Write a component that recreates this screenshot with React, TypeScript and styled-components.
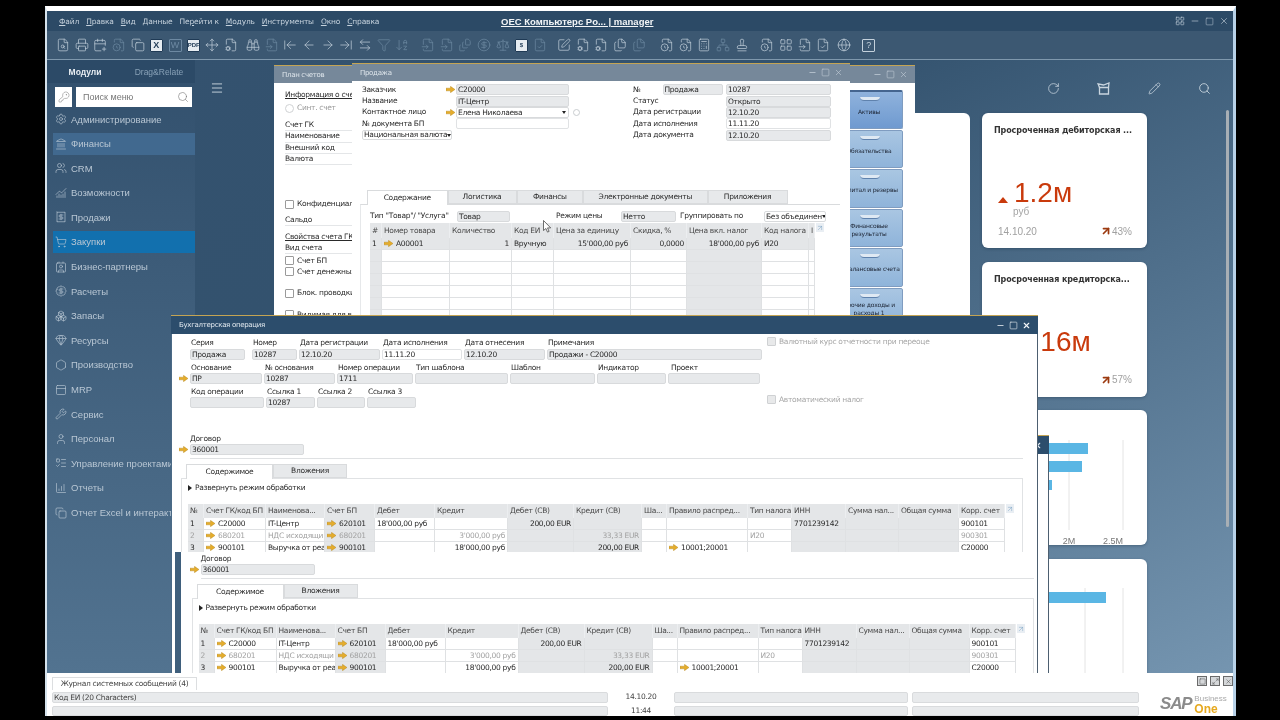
import React from "react";
import styled, { createGlobalStyle } from "styled-components";
import {
  ArrowDownAZ,
  ArrowLeft,
  ArrowLeftRight,
  ArrowLeftToLine,
  ArrowRight,
  ArrowRightToLine,
  ArrowUpRight,
  BadgeDollarSign,
  Binoculars,
  Boxes,
  Calculator,
  CalendarPlus,
  ChartColumnIncreasing,
  ChartNoAxesCombined,
  CircleDollarSign,
  Contact,
  Copy,
  FileCheck,
  FileClock,
  FileCog,
  FileInput,
  FileSearch,
  FileStack,
  Files,
  Filter,
  Gem,
  Globe,
  Hexagon,
  KeyRound,
  Landmark,
  LayoutGrid,
  ListTodo,
  Maximize2,
  Menu,
  Minus,
  Move,
  Network,
  PanelTop,
  Pencil,
  Printer,
  Receipt,
  RotateCw,
  Scale,
  Search,
  Settings,
  ShoppingCart,
  Square,
  SquarePen,
  Stamp,
  User,
  Users,
  Wrench,
  X,
} from "lucide-react";

const formFont = `"DejaVu Sans", "Liberation Sans", sans-serif`;
const uiFont = `"Liberation Sans", Arial, sans-serif`;

const GlobalStyle = createGlobalStyle`
  html, body {
    margin: 0;
    background: #000;
    overflow: hidden;
  }
  * {
    box-sizing: border-box;
  }
`;

const Frame = styled.div`
  width: 1191px;
  height: 710px;
  margin: 6px 0 0 45px;
  display: flex;
  flex-direction: column;
  background: #fff;
  border-top: 5px solid #fff;
  border-left: 2px solid #d5e2ec;
  border-right: 3px solid #b8d2e8;
  font-family: ${uiFont};
  filter: blur(0.35px);
`;

const TitleBar = styled.div`
  height: 20px;
  flex: none;
  position: relative;
  display: flex;
  align-items: center;
  padding: 0 4px 0 12px;
  background: #2c4a66;
`;

const MenuBar = styled.nav`
  display: flex;
  gap: 7px;
  color: #c6d2dd;
  font: 7.5px ${formFont};
  letter-spacing: -0.15px;
`;

const AppTitle = styled.div`
  position: absolute;
  left: 454px;
  color: #f2f5f7;
  font-size: 9.5px;
  font-weight: 700;
  text-decoration: underline;
  white-space: nowrap;
`;

const FrameControls = styled.div`
  margin-left: auto;
  display: flex;
  align-items: center;
  gap: 5px;
  color: #c3d0db;
`;

const Toolbar = styled.div`
  height: 29px;
  flex: none;
  display: flex;
  align-items: center;
  padding-left: 6.6px;
  background: #3c5872;
  border-bottom: 1px solid #7f98ad;
`;

const ToolGroup = styled.div<{ $offset: number }>`
  display: flex;
  margin-left: ${(p) => p.$offset}px;
`;

const ToolButton = styled.span<{ $dim?: boolean }>`
  width: 18.7px;
  height: 15px;
  display: flex;
  align-items: center;
  justify-content: center;
  color: ${(p) => (p.$dim ? "#6d89a2" : "#c4d1dc")};
`;

const BoxGlyph = styled.span<{ $solid?: boolean; $dim?: boolean }>`
  width: 13px;
  height: 13px;
  display: flex;
  align-items: center;
  justify-content: center;
  border: 1px solid currentColor;
  border-radius: 1px;
  background: ${(p) => (p.$solid ? "#e6ecf1" : "transparent")};
  color: ${(p) => (p.$solid ? "#1f3a55" : "inherit")};
  font: ${(p) => (p.$solid ? 700 : 400)} ${(p) => (p.$dim ? 6 : 9)}px ${uiFont};
`;

const Workspace = styled.div`
  position: relative;
  flex: 1;
  min-height: 0;
  display: flex;
  overflow: hidden;
  background: linear-gradient(155deg, #34526f 0%, #33526e 32%, #4f6f8b 62%, #7595b0 100%);
`;

const Sidebar = styled.aside`
  width: 148px;
  flex: none;
  background: linear-gradient(180deg, #32506d 0%, #527390 100%);
`;

const SideTabs = styled.div`
  height: 23px;
  display: flex;
  align-items: center;
  background: #2c4a67;
  font-size: 8.5px;
`;

const SideTab = styled.span<{ $active?: boolean; $width: number }>`
  width: ${(p) => p.$width}px;
  text-align: center;
  color: ${(p) => (p.$active ? "#e9eef3" : "#87a0b6")};
  font-weight: ${(p) => (p.$active ? 700 : 400)};
`;

const SearchRow = styled.div`
  display: flex;
  gap: 4px;
  padding: 4px 3px 0 8px;
`;

const KeyButton = styled.span`
  width: 17px;
  height: 20px;
  display: flex;
  align-items: center;
  justify-content: center;
  background: #fff;
  color: #8a8a8a;
`;

const SearchBox = styled.div`
  flex: 1;
  height: 20px;
  display: flex;
  align-items: center;
  justify-content: space-between;
  padding: 0 3px 0 7px;
  background: #fff;
  color: #777;
  font-size: 9px;
`;

const SideList = styled.ul`
  list-style: none;
  margin: 1px 0 0 6px;
  padding: 0;
`;

const SideItem = styled.li<{ $tone?: "soft" | "strong" }>`
  height: 22px;
  margin-bottom: 2.6px;
  display: flex;
  align-items: center;
  gap: 4px;
  padding-left: 2px;
  white-space: nowrap;
  color: #b9c7d4;
  font-size: 9.5px;
  background: ${(p) =>
    p.$tone === "soft" ? "#41698f" : p.$tone === "strong" ? "#1270ae" : "transparent"};
  svg {
    flex: none;
  }
`;

const Dashboard = styled.main`
  flex: 1;
  min-width: 0;
  display: flex;
  flex-direction: column;
`;

const DashHead = styled.div`
  height: 53px;
  flex: none;
  display: flex;
  align-items: center;
  justify-content: space-between;
  padding: 3px 22px 0 15px;
  color: #c9d5df;
`;

const DashTools = styled.div`
  display: flex;
  gap: 37px;
`;

const CardRow = styled.div`
  display: flex;
  justify-content: flex-end;
  gap: 12px;
  padding-right: 86px;
`;

const CardStack = styled.div`
  width: 165px;
  display: flex;
  flex-direction: column;
  gap: 13.5px;
`;

const WideCard = styled.div`
  width: 270px;
  height: 284px;
  background: #fff;
  border-radius: 6px;
`;

const Card = styled.article<{ $flush?: boolean }>`
  height: 135px;
  flex: none;
  display: flex;
  flex-direction: column;
  padding: ${(p) => (p.$flush ? "0" : "13px 15px 11px 12px")};
  background: #fff;
  border-radius: 6px;
  box-shadow: 0 1px 3px rgba(20, 40, 60, 0.35);
  overflow: hidden;
`;

const CardTitle = styled.h3`
  margin: 0;
  height: 10px;
  color: #333;
  font: 700 8px/10px ${formFont};
  letter-spacing: -0.1px;
  white-space: nowrap;
`;

const ValueLine = styled.div`
  margin-top: 44px;
  height: 27px;
  display: flex;
  align-items: flex-end;
  padding-left: 4px;
`;

const Rise = styled.span`
  width: 0;
  height: 0;
  margin-bottom: 4px;
  border-left: 5.5px solid transparent;
  border-right: 5.5px solid transparent;
  border-bottom: 6px solid #c93a0c;
`;

const Value = styled.span<{ $shift: number }>`
  margin-left: ${(p) => p.$shift}px;
  color: #c93a0c;
  font-size: 28px;
  line-height: 28px;
`;

const Unit = styled.span`
  height: 12px;
  margin: -1px 0 0 19px;
  color: #a4a4a4;
  font-size: 10px;
  line-height: 12px;
`;

const CardFoot = styled.div`
  margin-top: auto;
  padding-left: 4px;
  display: flex;
  align-items: center;
  justify-content: space-between;
  color: #a0a0a0;
  font-size: 10px;
`;

const Trend = styled.span`
  display: flex;
  align-items: center;
  color: #a0a0a0;
  svg {
    color: #9c3a10;
  }
`;

const Scrollbar = styled.div`
  position: absolute;
  right: 4px;
  top: 50px;
  width: 3.5px;
  height: 417px;
  border-radius: 2px;
  background: #a8afb5;
`;

const Win = styled.section<{ $x: number; $y: number; $w: number; $h: number; $z: number }>`
  position: absolute;
  left: ${(p) => p.$x}px;
  top: ${(p) => p.$y}px;
  width: ${(p) => p.$w}px;
  height: ${(p) => p.$h}px;
  z-index: ${(p) => p.$z};
  display: flex;
  flex-direction: column;
  background: #fff;
  border-top: 1px solid #c4a453;
  overflow: hidden;
  font: 7.5px/10px ${formFont};
  letter-spacing: -0.3px;
  color: #2a2a2a;
`;

const WinTitle = styled.header<{ $active?: boolean; $h: number }>`
  height: ${(p) => p.$h}px;
  flex: none;
  display: flex;
  align-items: center;
  justify-content: space-between;
  padding: 0 7px 0 8px;
  background: ${(p) => (p.$active ? "#2c4d6c" : "#76889a")};
  color: ${(p) => (p.$active ? "#e4ebf1" : "#dfe6ec")};
  font-size: 7px;
  white-space: nowrap;
`;

const WinControls = styled.div<{ $active?: boolean }>`
  display: flex;
  align-items: center;
  gap: 4px;
  color: ${(p) => (p.$active ? "#f4f7f9" : "#c4cfd8")};
`;

const Row = styled.div<{ $cols: string; $h?: number }>`
  display: grid;
  grid-template-columns: ${(p) => p.$cols};
  height: ${(p) => (p.$h ? `${p.$h}px` : "auto")};
  align-items: center;
`;

const Field = styled.div<{ $open?: boolean; $width?: number; $h?: number }>`
  width: ${(p) => (p.$width ? `${p.$width}px` : "auto")};
  height: ${(p) => p.$h ?? 11}px;
  padding: 0 1px;
  border: 1px solid ${(p) => (p.$open ? "#e0e2e4" : "#d8dadc")};
  border-radius: 2px;
  background: ${(p) => (p.$open ? "#fff" : "#e7e9eb")};
  color: #2a2a2a;
  line-height: ${(p) => (p.$h ?? 11) - 2}px;
  white-space: nowrap;
  overflow: hidden;
`;

const Dropdown = styled(Field)`
  display: flex;
  align-items: center;
  justify-content: space-between;
  background: #fff;
  &::after {
    content: "";
    border-left: 2.5px solid transparent;
    border-right: 2.5px solid transparent;
    border-top: 3px solid #222;
    margin-right: 1px;
    flex: none;
  }
`;

const Caption = styled.span<{ $inset?: boolean }>`
  white-space: nowrap;
  padding-left: ${(p) => (p.$inset ? 1 : 0)}px;
`;

const ArrowCell = styled.span`
  display: flex;
  align-items: center;
  justify-content: flex-end;
  padding-right: 1px;
`;

const TabStrip = styled.div`
  display: flex;
  height: 14px;
  flex: none;
`;

const Tab = styled.span<{ $active?: boolean; $width: number }>`
  width: ${(p) => p.$width}px;
  display: flex;
  align-items: center;
  justify-content: center;
  margin-bottom: ${(p) => (p.$active ? "-1px" : "0")};
  background: ${(p) => (p.$active ? "#fff" : "#e7e9eb")};
  border: 1px solid #d9dbdd;
  border-bottom: ${(p) => (p.$active ? "none" : "1px solid #d9dbdd")};
  position: relative;
  z-index: 1;
  white-space: nowrap;
`;

const HeadCell = styled.span`
  height: 100%;
  padding: 0 2px;
  display: flex;
  align-items: center;
  overflow: hidden;
  white-space: nowrap;
  background: #e4e6e8;
  color: #4a4a4a;
  border-right: 1px solid #eceef0;
`;

const BodyCell = styled.span<{ $shade?: boolean; $right?: boolean; $muted?: boolean }>`
  height: 100%;
  padding: 0 2px;
  display: flex;
  align-items: center;
  gap: 3px;
  justify-content: ${(p) => (p.$right ? "flex-end" : "flex-start")};
  overflow: hidden;
  white-space: nowrap;
  background: ${(p) => (p.$shade ? "#e4e6e8" : "transparent")};
  color: ${(p) => (p.$muted ? "#a2a2a2" : "#2a2a2a")};
  border-right: 1px solid #dfe1e3;
  border-bottom: 1px solid #dfe1e3;
  svg {
    flex: none;
  }
`;

const Expander = styled.span`
  width: 8px;
  height: 9px;
  margin-left: 1px;
  flex: none;
  display: flex;
  align-items: center;
  justify-content: center;
  background: #e9eef3;
  color: #5f8fb8;
`;

const PlanBody = styled.div`
  flex: 1;
  display: flex;
  justify-content: space-between;
  padding: 6px 12px 0 11px;
`;

const PlanForm = styled.div`
  width: 300px;
  display: flex;
  flex-direction: column;
`;

const PlanLine = styled.div<{ $top?: number; $ruled?: boolean; $muted?: boolean }>`
  height: 11.4px;
  flex: none;
  margin-top: ${(p) => p.$top ?? 0}px;
  display: flex;
  align-items: center;
  gap: 3px;
  color: ${(p) => (p.$muted ? "#9a9a9a" : "inherit")};
  white-space: nowrap;
  border-bottom: ${(p) => (p.$ruled ? "1px solid #e4e6e8" : "none")};
`;

const Underlined = styled.span`
  text-decoration: underline;
`;

const RadioMark = styled.span`
  width: 9px;
  height: 9px;
  border: 1px solid #d0d2d4;
  border-radius: 50%;
`;

const CheckMark = styled.span<{ $dim?: boolean }>`
  width: 9px;
  height: 9px;
  flex: none;
  border: 1px solid ${(p) => (p.$dim ? "#cfd1d3" : "#9a9a9a")};
  background: ${(p) => (p.$dim ? "#e8e9ea" : "#fff")};
  border-radius: 1px;
`;

const Drawers = styled.div`
  width: 68px;
  margin-top: 1px;
  display: flex;
  flex-direction: column;
  gap: 1px;
`;

const Drawer = styled.div<{ $active?: boolean }>`
  height: 38.5px;
  flex: none;
  position: relative;
  display: flex;
  align-items: center;
  justify-content: center;
  text-align: center;
  padding: 4px 0 0;
  font-size: 6px;
  line-height: 8px;
  letter-spacing: -0.2px;
  color: #1c2433;
  border: 1px solid #7f9cc0;
  border-top: ${(p) => (p.$active ? "2px solid #45658f" : "1px solid #7f9cc0")};
  border-radius: 2px;
  background: ${(p) =>
    p.$active
      ? "linear-gradient(180deg, #8fb2dc 0%, #6f9ad0 100%)"
      : "linear-gradient(180deg, #a9c6e2 0%, #8fb4da 100%)"};
  &::before {
    content: "";
    position: absolute;
    top: 5px;
    left: 24px;
    width: 20px;
    height: 3px;
    border-radius: 0 0 4px 4px;
    background: #dfe9f3;
    border-bottom: 1px solid #5f82ad;
  }
`;

const SaleBody = styled.div`
  flex: 1;
  padding: 3px 0 0 10px;
  position: relative;
`;

const SaleHead = styled.div`
  display: flex;
  height: 58px;
`;

const SaleStack = styled.div<{ $width: number }>`
  width: ${(p) => p.$width}px;
  display: flex;
  flex-direction: column;
`;

const InfoDot = styled.span`
  width: 7px;
  height: 7px;
  margin-left: 4px;
  border: 1px solid #c9cdd0;
  border-radius: 50%;
`;

const NumberLabel = styled.span`
  display: flex;
  gap: 22px;
  align-items: center;
`;

const SaleTabs = styled.div`
  margin: 47.5px 0 0 5px;
`;

const SalePanel = styled.div`
  width: 480px;
  margin-left: -2px;
  padding: 5.5px 0 0 9px;
  border-top: 1px solid #d9dbdd;
  border-left: 1px solid #e6e8ea;
`;

const TableWrap = styled.div`
  display: flex;
  align-items: flex-start;
  margin-top: 1px;
`;

const Cursor = styled.svg`
  position: absolute;
  left: 191px;
  top: 139px;
  z-index: 3;
`;

const GhostEdge = styled.div`
  flex: 1;
  border-right: 1px solid #4d5f70;
`;

const AccBody = styled.div`
  flex: 1;
  min-height: 0;
  display: flex;
  flex-direction: column;
  border-right: 1px solid #4d5f70;
  border-left: 1px solid #4b6a86;
`;

const AccHead = styled.div`
  display: flex;
  flex: none;
  height: 98px;
  padding: 3px 0 0 7px;
`;

const AccFields = styled.div`
  width: 585px;
  display: flex;
  flex-direction: column;
  gap: 2px;
`;

const AccChecks = styled.div`
  margin-left: 3px;
  color: #a6a6a6;
  display: flex;
  flex-direction: column;
  gap: 49px;
`;

const CheckLine = styled.div`
  display: flex;
  align-items: center;
  gap: 3px;
  height: 9px;
  white-space: nowrap;
`;

const Clip = styled.div<{ $ghost?: boolean }>`
  overflow: hidden;
  flex: ${(p) => (p.$ghost ? 1 : "none")};
  height: ${(p) => (p.$ghost ? "auto" : "120px")};
  min-height: 0;
  margin-left: ${(p) => (p.$ghost ? 3 : 0)}px;
  padding-left: ${(p) => (p.$ghost ? 0 : 7)}px;
  border-left: ${(p) => (p.$ghost ? "6px solid #3f5f7c" : "none")};
`;

const Ledger = styled.div<{ $ghost?: boolean }>`
  width: 844px;
  padding-top: 2px;
  margin-left: ${(p) => (p.$ghost ? "8.5px" : "0")};
`;

const ContractLabel = styled.div`
  margin-left: 11px;
  height: 9px;
  line-height: 9px;
`;

const ContractRow = styled.div`
  display: flex;
  margin-top: 1px;
  gap: 2px;
`;

const ArrowSlot = styled.span`
  width: 9px;
  display: flex;
  align-items: center;
  justify-content: flex-end;
`;

const Divider = styled.div`
  height: 1px;
  margin: 3px 0 0 11px;
  background: #dfe1e3;
`;

const LedgerTabs = styled.div`
  margin: 5px 0 0 7px;
`;

const LedgerPanel = styled.div`
  margin-left: 2px;
  padding: 4px 0 0 6px;
  border: 1px solid #e0e2e4;
  border-bottom: none;
`;

const Unfold = styled.div`
  height: 10px;
  display: flex;
  align-items: center;
  gap: 3px;
  white-space: nowrap;
  &::before {
    content: "";
    border-top: 3px solid transparent;
    border-bottom: 3px solid transparent;
    border-left: 4px solid #222;
  }
`;

const LedgerWrap = styled.div`
  display: flex;
  align-items: flex-start;
  margin-top: 11px;
`;

const StatusArea = styled.footer`
  height: 43px;
  flex: none;
  padding-left: 5px;
  background: #fff;
  font: 7.5px/10px ${formFont};
  letter-spacing: -0.3px;
  color: #444;
`;

const StatusTop = styled.div`
  height: 17px;
  display: flex;
  align-items: flex-end;
  justify-content: space-between;
`;

const LogTab = styled.span`
  width: 145px;
  height: 13px;
  display: flex;
  align-items: center;
  justify-content: center;
  border: 1px solid #dcdee0;
  border-bottom: none;
  white-space: nowrap;
`;

const DockButtons = styled.div`
  display: flex;
  gap: 3px;
  align-self: flex-start;
  margin-top: 3px;
`;

const DockButton = styled.span`
  width: 10px;
  height: 10px;
  display: flex;
  align-items: center;
  justify-content: center;
  background: #d5d7d9;
  border: 1px solid #6a6a6a;
  color: #444;
`;

const StatusGrid = styled.div`
  display: grid;
  grid-template-columns: 556px 66px 234px 231px 1fr;
  grid-template-rows: 11px 10px;
  row-gap: 3px;
  margin-top: 2px;
`;

const StatusBar = styled.div<{ $gap?: boolean }>`
  margin-left: ${(p) => (p.$gap ? 4 : 0)}px;
  padding-left: 1px;
  border: 1px solid #d9dbdd;
  border-radius: 2px;
  background: #e8eaec;
  line-height: 9px;
  white-space: nowrap;
`;

const StatusClock = styled.div`
  text-align: center;
  line-height: 10px;
`;

const Logo = styled.div`
  grid-column: 5;
  grid-row: 1 / span 2;
  display: flex;
  align-items: center;
  margin-left: 21px;
`;

const LogoMark = styled.span`
  color: #8b8b8b;
  font: 700 italic 17px/18px ${uiFont};
  letter-spacing: -1.2px;
`;

const LogoWords = styled.span`
  display: flex;
  flex-direction: column;
  margin-left: 3px;
`;

const LogoSmall = styled.span`
  color: #a9a9a9;
  font: 8px/9px ${uiFont};
  letter-spacing: 0;
`;

const LogoOne = styled.span`
  color: #e6a91f;
  font: 700 12px/12px ${uiFont};
  letter-spacing: 0;
`;

const GoldArrow = () => (
  <svg width="9" height="7" viewBox="0 0 10 7">
    <path d="M0 2h5V0l5 3.5L5 7V5H0z" fill="#e5ad2c" stroke="#a8790f" strokeWidth="0.4" />
  </svg>
);

const Controls = ({ active }: { active?: boolean }) => (
  <WinControls $active={active}>
    <Minus size={9} strokeWidth={2} />
    <Square size={9} strokeWidth={1.5} />
    <X size={9} strokeWidth={active ? 3 : 1.6} />
  </WinControls>
);

const FlapBox = () => (
  <svg width="14" height="13" viewBox="0 0 14 13" fill="none" stroke="currentColor" strokeWidth="1.3">
    <path d="M2.5 5.5h9v6.5h-9z" />
    <path d="M2.5 5.5L1 1.8l5.5 1.2L12 1l-.5 4.5" />
  </svg>
);

const ico = { size: 14, strokeWidth: 1.2 };

const toolbar: { offset: number; items: { node: React.ReactNode; dim?: boolean }[] }[] = [
  {
    offset: 0,
    items: [
      { node: <FileSearch {...ico} /> },
      { node: <Printer {...ico} /> },
      { node: <CalendarPlus {...ico} /> },
      { node: <FileClock {...ico} />, dim: true },
      { node: <Copy {...ico} /> },
      { node: <BoxGlyph $solid>X</BoxGlyph> },
      { node: <BoxGlyph>W</BoxGlyph>, dim: true },
      { node: <BoxGlyph $solid $dim>PDF</BoxGlyph>, dim: true },
      { node: <Move {...ico} /> },
      { node: <FileCog {...ico} /> },
    ],
  },
  {
    offset: 3,
    items: [
      { node: <Binoculars {...ico} /> },
      { node: <FileInput {...ico} />, dim: true },
      { node: <ArrowLeftToLine {...ico} /> },
      { node: <ArrowLeft {...ico} /> },
      { node: <ArrowRight {...ico} /> },
      { node: <ArrowRightToLine {...ico} /> },
      { node: <ArrowLeftRight {...ico} /> },
      { node: <Filter {...ico} />, dim: true },
      { node: <ArrowDownAZ {...ico} />, dim: true },
    ],
  },
  {
    offset: 7,
    items: [
      { node: <FileInput {...ico} />, dim: true },
      { node: <FileInput {...ico} />, dim: true },
      { node: <FileStack {...ico} />, dim: true },
      { node: <CircleDollarSign {...ico} />, dim: true },
      { node: <Scale {...ico} />, dim: true },
      { node: <BoxGlyph $solid $dim>$</BoxGlyph> },
      { node: <FileCheck {...ico} />, dim: true },
    ],
  },
  {
    offset: 5,
    items: [
      { node: <SquarePen {...ico} /> },
      { node: <FileCog {...ico} /> },
      { node: <FileCog {...ico} /> },
      { node: <Files {...ico} /> },
      { node: <Files {...ico} />, dim: true },
    ],
  },
  {
    offset: 9.6,
    items: [
      { node: <FileClock {...ico} /> },
      { node: <FileClock {...ico} /> },
      { node: <Calculator {...ico} /> },
      { node: <Network {...ico} />, dim: true },
      { node: <Stamp {...ico} /> },
    ],
  },
  {
    offset: 7,
    items: [
      { node: <FileClock {...ico} /> },
      { node: <LayoutGrid {...ico} /> },
      { node: <FileInput {...ico} /> },
      { node: <FileCheck {...ico} /> },
    ],
  },
  { offset: 2, items: [{ node: <Globe {...ico} /> }] },
  { offset: 6, items: [{ node: <BoxGlyph>?</BoxGlyph> }] },
];

const side = { size: 12, strokeWidth: 1.3 };

const modules: { label: string; icon: React.ReactNode; tone?: "soft" | "strong" }[] = [
  { label: "Администрирование", icon: <Settings {...side} /> },
  { label: "Финансы", icon: <Landmark {...side} />, tone: "soft" },
  { label: "CRM", icon: <Users {...side} /> },
  { label: "Возможности", icon: <ChartNoAxesCombined {...side} /> },
  { label: "Продажи", icon: <Receipt {...side} /> },
  { label: "Закупки", icon: <ShoppingCart {...side} />, tone: "strong" },
  { label: "Бизнес-партнеры", icon: <Contact {...side} /> },
  { label: "Расчеты", icon: <BadgeDollarSign {...side} /> },
  { label: "Запасы", icon: <Boxes {...side} /> },
  { label: "Ресурсы", icon: <Gem {...side} /> },
  { label: "Производство", icon: <Hexagon {...side} /> },
  { label: "MRP", icon: <PanelTop {...side} /> },
  { label: "Сервис", icon: <Wrench {...side} /> },
  { label: "Персонал", icon: <User {...side} /> },
  { label: "Управление проектами", icon: <ListTodo {...side} /> },
  { label: "Отчеты", icon: <ChartColumnIncreasing {...side} /> },
  { label: "Отчет Excel и интеракт", icon: <Copy {...side} /> },
];

const saleCols = "12px 68px 62px 42px 77px 56px 75px 47px 6px";

const saleHeads = [
  "#",
  "Номер товара",
  "Количество",
  "Код ЕИ",
  "Цена за единицу",
  "Скидка, %",
  "Цена вкл. налог",
  "Код налога",
  "I",
];

const ledgerCols = "16px 62px 59px 50px 60px 73px 66px 68px 25px 81px 44px 54px 53px 60px 46px";

const ledgerHeads = [
  "№",
  "Счет ГК/код БП",
  "Наименова...",
  "Счет БП",
  "Дебет",
  "Кредит",
  "Дебет (СВ)",
  "Кредит (СВ)",
  "Ша...",
  "Правило распред...",
  "Тип налога",
  "ИНН",
  "Сумма нал...",
  "Общая сумма",
  "Корр. счет",
];

const ledgerRows = [
  {
    no: "1",
    acc: "C20000",
    name: "IT-Центр",
    bp: "620101",
    debit: "18'000,00 руб",
    credit: "",
    fcDebit: "200,00 EUR",
    fcCredit: "",
    rule: "",
    tax: "",
    inn: "7701239142",
    corr: "900101",
    muted: false,
  },
  {
    no: "2",
    acc: "680201",
    name: "НДС исходящи",
    bp: "680201",
    debit: "",
    credit: "3'000,00 руб",
    fcDebit: "",
    fcCredit: "33,33 EUR",
    rule: "",
    tax: "И20",
    inn: "",
    corr: "900301",
    muted: true,
  },
  {
    no: "3",
    acc: "900101",
    name: "Выручка от реа",
    bp: "900101",
    debit: "",
    credit: "18'000,00 руб",
    fcDebit: "",
    fcCredit: "200,00 EUR",
    rule: "10001;20001",
    tax: "",
    inn: "",
    corr: "C20000",
    muted: false,
  },
];

const LedgerSection = ({ ghost }: { ghost?: boolean }) => (
  <Ledger $ghost={ghost}>
    <ContractLabel>Договор</ContractLabel>
    <ContractRow>
      <ArrowSlot>
        <GoldArrow />
      </ArrowSlot>
      <Field $width={114}>360001</Field>
    </ContractRow>
    <Divider />
    <LedgerTabs>
      <TabStrip>
        <Tab $active $width={87}>
          Содержимое
        </Tab>
        <Tab $width={74}>Вложения</Tab>
      </TabStrip>
    </LedgerTabs>
    <LedgerPanel>
      <Unfold>Развернуть режим обработки</Unfold>
      <LedgerWrap>
        <div>
          <Row $cols={ledgerCols} $h={14}>
            {ledgerHeads.map((h) => (
              <HeadCell key={h}>{h}</HeadCell>
            ))}
          </Row>
          {ledgerRows.map((r) => (
            <Row key={r.no} $cols={ledgerCols} $h={12}>
              <BodyCell $shade $muted={r.muted}>
                {r.no}
              </BodyCell>
              <BodyCell $muted={r.muted}>
                <GoldArrow />
                {r.acc}
              </BodyCell>
              <BodyCell $muted={r.muted}>{r.name}</BodyCell>
              <BodyCell $shade $muted={r.muted}>
                <GoldArrow />
                {r.bp}
              </BodyCell>
              <BodyCell $muted={r.muted}>{r.debit}</BodyCell>
              <BodyCell $right $muted={r.muted}>
                {r.credit}
              </BodyCell>
              <BodyCell $shade $right $muted={r.muted}>
                {r.fcDebit}
              </BodyCell>
              <BodyCell $shade $right $muted={r.muted}>
                {r.fcCredit}
              </BodyCell>
              <BodyCell />
              <BodyCell $muted={r.muted}>
                {r.rule && <GoldArrow />}
                {r.rule}
              </BodyCell>
              <BodyCell $muted={r.muted}>{r.tax}</BodyCell>
              <BodyCell $shade>{r.inn}</BodyCell>
              <BodyCell $shade />
              <BodyCell $shade />
              <BodyCell $muted={r.muted}>{r.corr}</BodyCell>
            </Row>
          ))}
        </div>
        <Expander>
          <ArrowUpRight size={8} strokeWidth={1.2} />
        </Expander>
      </LedgerWrap>
    </LedgerPanel>
  </Ledger>
);

const ModuleSidebar = () => (
  <Sidebar>
    <SideTabs>
      <SideTab $active $width={76}>
        Модули
      </SideTab>
      <SideTab $width={72}>Drag&amp;Relate</SideTab>
    </SideTabs>
    <SearchRow>
      <KeyButton>
        <KeyRound size={12} strokeWidth={1.2} />
      </KeyButton>
      <SearchBox>
        Поиск меню
        <Search size={12} strokeWidth={1.2} />
      </SearchBox>
    </SearchRow>
    <SideList>
      {modules.map((m) => (
        <SideItem key={m.label} $tone={m.tone}>
          {m.icon}
          {m.label}
        </SideItem>
      ))}
    </SideList>
  </Sidebar>
);

const KpiCard = ({
  title,
  value,
  shift,
  percent,
}: {
  title: string;
  value: string;
  shift: number;
  percent: string;
}) => (
  <Card>
    <CardTitle>{title}</CardTitle>
    <ValueLine>
      <Rise />
      <Value $shift={shift}>{value}</Value>
    </ValueLine>
    <Unit>руб</Unit>
    <CardFoot>
      14.10.20
      <Trend>
        <ArrowUpRight size={12} strokeWidth={3.5} />
        {percent}
      </Trend>
    </CardFoot>
  </Card>
);

const DashboardArea = () => (
  <Dashboard>
    <DashHead>
      <Menu size={14} strokeWidth={1.6} />
      <DashTools>
        <RotateCw size={13} strokeWidth={1.4} />
        <FlapBox />
        <Pencil size={13} strokeWidth={1.4} />
        <Search size={13} strokeWidth={1.6} />
      </DashTools>
    </DashHead>
    <CardRow>
      <WideCard />
      <CardStack>
        <KpiCard title="Просроченная дебиторская ..." value="1.2м" shift={6} percent="43%" />
        <KpiCard title="Просроченная кредиторска..." value="1.16м" shift={9} percent="57%" />
        <Card $flush>
          <svg width="165" height="135">
            <line x1="87" y1="30" x2="87" y2="120" stroke="#e4e4e4" />
            <line x1="141" y1="30" x2="141" y2="120" stroke="#e4e4e4" />
            <rect x="0" y="33" width="106" height="11" fill="#5ab6e4" />
            <rect x="0" y="51" width="100" height="11" fill="#5ab6e4" />
            <rect x="0" y="70" width="70" height="10" fill="#5ab6e4" />
            <rect x="0" y="87" width="67" height="10" fill="#5ab6e4" />
            <text x="87" y="134" textAnchor="middle" fontSize="9" fill="#777">
              2M
            </text>
            <text x="141" y="134" textAnchor="end" fontSize="9" fill="#777">
              2.5M
            </text>
          </svg>
        </Card>
        <Card $flush>
          <svg width="165" height="135">
            <line x1="103" y1="29" x2="103" y2="135" stroke="#e4e4e4" />
            <line x1="141" y1="29" x2="141" y2="135" stroke="#e4e4e4" />
            <rect x="0" y="33" width="124" height="11" fill="#5ab6e4" />
          </svg>
        </Card>
      </CardStack>
    </CardRow>
    <Scrollbar />
  </Dashboard>
);

const ChartOfAccounts = () => (
  <Win $x={227} $y={5} $w={641} $h={265} $z={1}>
    <WinTitle $h={17}>
      План счетов
      <Controls />
    </WinTitle>
    <PlanBody>
      <PlanForm>
        <PlanLine>
          <Underlined>Информация о счете</Underlined>
        </PlanLine>
        <PlanLine $top={2} $muted>
          <RadioMark />
          Синт. счет
        </PlanLine>
        <PlanLine $top={6} $ruled>
          Счет ГК
        </PlanLine>
        <PlanLine $ruled>Наименование</PlanLine>
        <PlanLine $ruled>Внешний код</PlanLine>
        <PlanLine $ruled>Валюта</PlanLine>
        <PlanLine $top={33}>
          <CheckMark />
          Конфиденциальный
        </PlanLine>
        <PlanLine $top={5} $ruled>
          Сальдо
        </PlanLine>
        <PlanLine $top={5}>
          <Underlined>Свойства счета ГК</Underlined>
        </PlanLine>
        <PlanLine $ruled>Вид счета</PlanLine>
        <PlanLine $top={1}>
          <CheckMark />
          Счет БП
        </PlanLine>
        <PlanLine>
          <CheckMark />
          Счет денежных средств
        </PlanLine>
        <PlanLine $top={10}>
          <CheckMark />
          Блок. проводки вручную
        </PlanLine>
        <PlanLine $top={10}>
          <CheckMark />
          Видимая для всех
        </PlanLine>
      </PlanForm>
      <Drawers>
        <Drawer $active>Активы</Drawer>
        <Drawer>Обязательства</Drawer>
        <Drawer>Капитал и резервы</Drawer>
        <Drawer>
          Финансовые
          <br />
          результаты
        </Drawer>
        <Drawer>Забалансовые счета</Drawer>
        <Drawer>
          Прочие доходы и
          <br />
          расходы 1
        </Drawer>
      </Drawers>
    </PlanBody>
  </Win>
);

const SaleWindow = () => (
  <Win $x={305} $y={3} $w={498} $h={260} $z={2}>
    <WinTitle $h={17}>
      Продажа
      <Controls />
    </WinTitle>
    <SaleBody>
      <SaleHead>
        <SaleStack $width={271}>
          <Row $cols="82px 12px 113px" $h={11.4}>
            <Caption>Заказчик</Caption>
            <ArrowCell>
              <GoldArrow />
            </ArrowCell>
            <Field>C20000</Field>
          </Row>
          <Row $cols="82px 12px 113px" $h={11.4}>
            <Caption>Название</Caption>
            <span />
            <Field>IT-Центр</Field>
          </Row>
          <Row $cols="82px 12px 113px 12px" $h={11.4}>
            <Caption>Контактное лицо</Caption>
            <ArrowCell>
              <GoldArrow />
            </ArrowCell>
            <Dropdown>Елена Николаева</Dropdown>
            <InfoDot />
          </Row>
          <Row $cols="82px 12px 113px" $h={11.4}>
            <Caption>№ документа БП</Caption>
            <span />
            <Field $open />
          </Row>
          <Row $cols="90px" $h={11.4}>
            <Dropdown $h={10}>Национальная валюта</Dropdown>
          </Row>
        </SaleStack>
        <SaleStack $width={198}>
          <Row $cols="93px 105px" $h={11.4}>
            <NumberLabel>
              <Caption>№</Caption>
              <Field $width={60}>Продажа</Field>
            </NumberLabel>
            <Field>10287</Field>
          </Row>
          <Row $cols="93px 105px" $h={11.4}>
            <Caption>Статус</Caption>
            <Field>Открыто</Field>
          </Row>
          <Row $cols="93px 105px" $h={11.4}>
            <Caption>Дата регистрации</Caption>
            <Field>12.10.20</Field>
          </Row>
          <Row $cols="93px 105px" $h={11.4}>
            <Caption>Дата исполнения</Caption>
            <Field $open>11.11.20</Field>
          </Row>
          <Row $cols="93px 105px" $h={11.4}>
            <Caption>Дата документа</Caption>
            <Field>12.10.20</Field>
          </Row>
        </SaleStack>
      </SaleHead>
      <SaleTabs>
        <TabStrip>
          <Tab $active $width={80.5}>
            Содержание
          </Tab>
          <Tab $width={69}>Логистика</Tab>
          <Tab $width={66.5}>Финансы</Tab>
          <Tab $width={124.5}>Электронные документы</Tab>
          <Tab $width={80}>Приложения</Tab>
        </TabStrip>
      </SaleTabs>
      <SalePanel>
        <Row $cols="87px 99px 65px 59px 84px 62px" $h={12}>
          <Caption>Тип "Товар"/ "Услуга"</Caption>
          <Field $width={53}>Товар</Field>
          <Caption>Режим цены</Caption>
          <Field $width={55}>Нетто</Field>
          <Caption>Группировать по</Caption>
          <Dropdown>Без объединен</Dropdown>
        </Row>
        <TableWrap>
          <div>
            <Row $cols={saleCols} $h={15}>
              {saleHeads.map((h) => (
                <HeadCell key={h}>{h}</HeadCell>
              ))}
            </Row>
            <Row $cols={saleCols} $h={12}>
              <BodyCell $shade>1</BodyCell>
              <BodyCell $shade>
                <GoldArrow />
                A00001
              </BodyCell>
              <BodyCell $shade $right>
                1
              </BodyCell>
              <BodyCell $shade>Вручную</BodyCell>
              <BodyCell $shade $right>
                15'000,00 руб
              </BodyCell>
              <BodyCell $shade $right>
                0,0000
              </BodyCell>
              <BodyCell $shade $right>
                18'000,00 руб
              </BodyCell>
              <BodyCell $shade>И20</BodyCell>
              <BodyCell $shade />
            </Row>
            {[0, 1, 2, 3, 4, 5].map((n) => (
              <Row key={n} $cols={saleCols} $h={12}>
                <BodyCell $shade />
                <BodyCell />
                <BodyCell />
                <BodyCell />
                <BodyCell />
                <BodyCell />
                <BodyCell $shade />
                <BodyCell />
                <BodyCell />
              </Row>
            ))}
          </div>
          <Expander>
            <ArrowUpRight size={8} strokeWidth={1.2} />
          </Expander>
        </TableWrap>
      </SalePanel>
      <Cursor width="9" height="13" viewBox="0 0 9 13">
        <path d="M0.5 0.5v10l2.4-2 1.6 3.6 1.6-.7-1.6-3.5h3.2z" fill="#fff" stroke="#333" strokeWidth="0.7" />
      </Cursor>
    </SaleBody>
  </Win>
);

const GhostWindow = () => (
  <Win $x={953} $y={375} $w={49} $h={238} $z={3}>
    <WinTitle $active $h={18}>
      <span />
      <X size={9} strokeWidth={3} />
    </WinTitle>
    <GhostEdge />
  </Win>
);

const JournalWindow = () => (
  <Win $x={124} $y={255} $w={867} $h={358} $z={4}>
    <WinTitle $active $h={18}>
      Бухгалтерская операция
      <Controls active />
    </WinTitle>
    <AccBody>
      <AccHead>
        <AccFields>
          <div>
            <Row $cols="11px 62px 47px 83px 82px 83px 217px" $h={12}>
              <span />
              <Caption $inset>Серия</Caption>
              <Caption $inset>Номер</Caption>
              <Caption $inset>Дата регистрации</Caption>
              <Caption $inset>Дата исполнения</Caption>
              <Caption $inset>Дата отнесения</Caption>
              <Caption $inset>Примечания</Caption>
            </Row>
            <Row $cols="11px 62px 47px 83px 82px 83px 215px" $h={11}>
              <span />
              <Field $width={55}>Продажа</Field>
              <Field $width={45}>10287</Field>
              <Field $width={81}>12.10.20</Field>
              <Field $width={80} $open>
                11.11.20
              </Field>
              <Field $width={81}>12.10.20</Field>
              <Field>Продажи - C20000</Field>
            </Row>
          </div>
          <div>
            <Row $cols="11px 74px 73px 78px 95px 87px 73px 92px" $h={11}>
              <span />
              <Caption $inset>Основание</Caption>
              <Caption $inset>№ основания</Caption>
              <Caption $inset>Номер операции</Caption>
              <Caption $inset>Тип шаблона</Caption>
              <Caption $inset>Шаблон</Caption>
              <Caption $inset>Индикатор</Caption>
              <Caption $inset>Проект</Caption>
            </Row>
            <Row $cols="11px 74px 73px 78px 95px 87px 71px 92px" $h={11}>
              <ArrowSlot>
                <GoldArrow />
              </ArrowSlot>
              <Field $width={72}>ПР</Field>
              <Field $width={71}>10287</Field>
              <Field $width={76}>1711</Field>
              <Field $width={93} />
              <Field $width={85} />
              <Field $width={69} />
              <Field />
            </Row>
          </div>
          <div>
            <Row $cols="11px 76px 51px 50px 50px" $h={11}>
              <span />
              <Caption $inset>Код операции</Caption>
              <Caption $inset>Ссылка 1</Caption>
              <Caption $inset>Ссылка 2</Caption>
              <Caption $inset>Ссылка 3</Caption>
            </Row>
            <Row $cols="11px 76px 51px 50px 50px" $h={11}>
              <span />
              <Field $width={74} />
              <Field $width={49}>10287</Field>
              <Field $width={48} />
              <Field $width={49} />
            </Row>
          </div>
        </AccFields>
        <AccChecks>
          <CheckLine>
            <CheckMark $dim />
            Валютный курс отчетности при переоце
          </CheckLine>
          <CheckLine>
            <CheckMark $dim />
            Автоматический налог
          </CheckLine>
        </AccChecks>
      </AccHead>
      <Clip>
        <LedgerSection />
      </Clip>
      <Clip $ghost>
        <LedgerSection ghost />
      </Clip>
    </AccBody>
  </Win>
);

const StatusFooter = () => (
  <StatusArea>
    <StatusTop>
      <LogTab>Журнал системных сообщений (4)</LogTab>
      <DockButtons>
        <DockButton>
          <Square size={7} strokeWidth={1.5} />
        </DockButton>
        <DockButton>
          <Maximize2 size={7} strokeWidth={1.5} />
        </DockButton>
        <DockButton>
          <X size={7} strokeWidth={1.5} />
        </DockButton>
      </DockButtons>
    </StatusTop>
    <StatusGrid>
      <StatusBar>Код ЕИ (20 Characters)</StatusBar>
      <StatusClock>14.10.20</StatusClock>
      <StatusBar />
      <StatusBar $gap />
      <Logo>
        <LogoMark>SAP</LogoMark>
        <LogoWords>
          <LogoSmall>Business</LogoSmall>
          <LogoOne>One</LogoOne>
        </LogoWords>
      </Logo>
      <StatusBar />
      <StatusClock>11:44</StatusClock>
      <StatusBar />
      <StatusBar $gap />
    </StatusGrid>
  </StatusArea>
);

const App = () => (
  <>
    <GlobalStyle />
    <Frame>
      <TitleBar>
        <MenuBar>
          <span>
            <u>Ф</u>айл
          </span>
          <span>
            <u>П</u>равка
          </span>
          <span>
            <u>В</u>ид
          </span>
          <span>
            <u>Д</u>анные
          </span>
          <span>
            Пе<u>р</u>ейти к
          </span>
          <span>
            <u>М</u>одуль
          </span>
          <span>
            <u>И</u>нструменты
          </span>
          <span>
            <u>О</u>кно
          </span>
          <span>
            <u>С</u>правка
          </span>
        </MenuBar>
        <AppTitle>OEC Компьютерс Po... | manager</AppTitle>
        <FrameControls>
          <LayoutGrid size={10} strokeWidth={1.5} />
          <Minus size={10} strokeWidth={1.5} />
          <Square size={9} strokeWidth={1.3} />
          <X size={10} strokeWidth={1.5} />
        </FrameControls>
      </TitleBar>
      <Toolbar>
        {toolbar.map((g, i) => (
          <ToolGroup key={i} $offset={g.offset}>
            {g.items.map((t, j) => (
              <ToolButton key={j} $dim={t.dim}>
                {t.node}
              </ToolButton>
            ))}
          </ToolGroup>
        ))}
      </Toolbar>
      <Workspace>
        <ModuleSidebar />
        <DashboardArea />
        <ChartOfAccounts />
        <SaleWindow />
        <GhostWindow />
        <JournalWindow />
      </Workspace>
      <StatusFooter />
    </Frame>
  </>
);

export default App;
